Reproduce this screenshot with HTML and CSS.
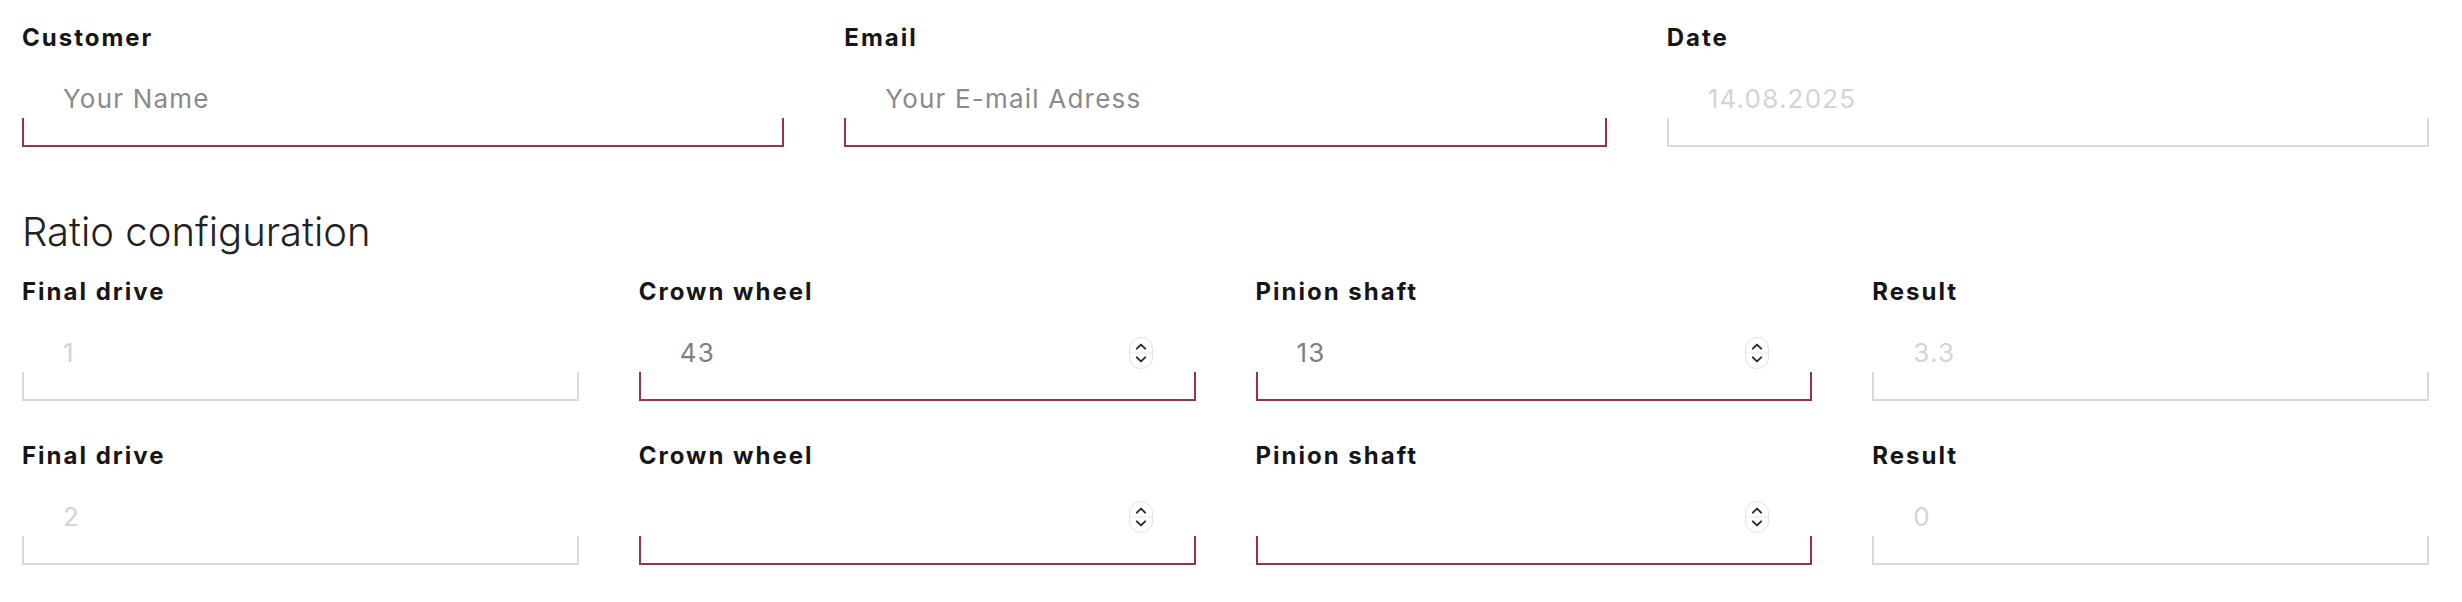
FILE: index.html
```html
<!DOCTYPE html>
<html lang="en">
<head>
<meta charset="utf-8">
<title>Ratio configuration</title>
<link rel="stylesheet" href="styles.css">
</head>
<body>
<div class="page">
  <div class="grid grid-3">
    <div class="field">
      <label class="label" for="customer">Customer</label>
      <div class="control"><input id="customer" class="input" type="text" placeholder="Your Name"></div>
    </div>
    <div class="field">
      <label class="label" for="email">Email</label>
      <div class="control"><input id="email" class="input" type="email" placeholder="Your E-mail Adress"></div>
    </div>
    <div class="field">
      <label class="label" for="date">Date</label>
      <div class="control is-disabled"><input id="date" class="input" type="text" value="14.08.2025" disabled></div>
    </div>
  </div>

  <h2 class="section-title">Ratio configuration</h2>

  <div class="ratio-rows">
    <div class="grid grid-4">
      <div class="field">
        <label class="label" for="fd1">Final drive</label>
        <div class="control is-disabled"><input id="fd1" class="input" type="text" value="1" disabled></div>
      </div>
      <div class="field">
        <label class="label" for="cw1">Crown wheel</label>
        <div class="control">
          <input id="cw1" class="input" type="number" value="43">
          <svg class="spinner" width="24" height="32" viewBox="0 0 24 32" aria-hidden="true"><rect x="0.5" y="0.5" width="23" height="31" rx="11.5" fill="#fff" stroke="#e3e3e3"/><line x1="1" y1="16" x2="23" y2="16" stroke="#e6e6e6"/><polyline points="7.8,11.6 12,7.6 16.2,11.6" fill="none" stroke="#2b2b2b" stroke-width="2" stroke-linecap="round" stroke-linejoin="round"/><polyline points="7.8,20.4 12,24.4 16.2,20.4" fill="none" stroke="#2b2b2b" stroke-width="2" stroke-linecap="round" stroke-linejoin="round"/></svg>
        </div>
      </div>
      <div class="field">
        <label class="label" for="ps1">Pinion shaft</label>
        <div class="control">
          <input id="ps1" class="input" type="number" value="13">
          <svg class="spinner" width="24" height="32" viewBox="0 0 24 32" aria-hidden="true"><rect x="0.5" y="0.5" width="23" height="31" rx="11.5" fill="#fff" stroke="#e3e3e3"/><line x1="1" y1="16" x2="23" y2="16" stroke="#e6e6e6"/><polyline points="7.8,11.6 12,7.6 16.2,11.6" fill="none" stroke="#2b2b2b" stroke-width="2" stroke-linecap="round" stroke-linejoin="round"/><polyline points="7.8,20.4 12,24.4 16.2,20.4" fill="none" stroke="#2b2b2b" stroke-width="2" stroke-linecap="round" stroke-linejoin="round"/></svg>
        </div>
      </div>
      <div class="field">
        <label class="label" for="r1">Result</label>
        <div class="control is-disabled"><input id="r1" class="input" type="text" value="3.3" disabled></div>
      </div>
    </div>

    <div class="grid grid-4">
      <div class="field">
        <label class="label" for="fd2">Final drive</label>
        <div class="control is-disabled"><input id="fd2" class="input" type="text" value="2" disabled></div>
      </div>
      <div class="field">
        <label class="label" for="cw2">Crown wheel</label>
        <div class="control">
          <input id="cw2" class="input" type="number">
          <svg class="spinner" width="24" height="32" viewBox="0 0 24 32" aria-hidden="true"><rect x="0.5" y="0.5" width="23" height="31" rx="11.5" fill="#fff" stroke="#e3e3e3"/><line x1="1" y1="16" x2="23" y2="16" stroke="#e6e6e6"/><polyline points="7.8,11.6 12,7.6 16.2,11.6" fill="none" stroke="#2b2b2b" stroke-width="2" stroke-linecap="round" stroke-linejoin="round"/><polyline points="7.8,20.4 12,24.4 16.2,20.4" fill="none" stroke="#2b2b2b" stroke-width="2" stroke-linecap="round" stroke-linejoin="round"/></svg>
        </div>
      </div>
      <div class="field">
        <label class="label" for="ps2">Pinion shaft</label>
        <div class="control">
          <input id="ps2" class="input" type="number">
          <svg class="spinner" width="24" height="32" viewBox="0 0 24 32" aria-hidden="true"><rect x="0.5" y="0.5" width="23" height="31" rx="11.5" fill="#fff" stroke="#e3e3e3"/><line x1="1" y1="16" x2="23" y2="16" stroke="#e6e6e6"/><polyline points="7.8,11.6 12,7.6 16.2,11.6" fill="none" stroke="#2b2b2b" stroke-width="2" stroke-linecap="round" stroke-linejoin="round"/><polyline points="7.8,20.4 12,24.4 16.2,20.4" fill="none" stroke="#2b2b2b" stroke-width="2" stroke-linecap="round" stroke-linejoin="round"/></svg>
        </div>
      </div>
      <div class="field">
        <label class="label" for="r2">Result</label>
        <div class="control is-disabled"><input id="r2" class="input" type="text" value="0" disabled></div>
      </div>
    </div>
  </div>
</div>
</body>
</html>
```

FILE: styles.css
```css
* { box-sizing: border-box; }

html, body {
  margin: 0;
  background: #ffffff;
}

body {
  font-family: Inter, "Noto Sans", "Liberation Sans", sans-serif;
  color: #1c1c1c;
}

.page {
  padding: 23px 33px 0 22px;
}

.grid {
  display: grid;
  column-gap: 60px;
}

.grid-3 { grid-template-columns: repeat(3, minmax(0, 1fr)); }
.grid-4 { grid-template-columns: repeat(4, minmax(0, 1fr)); }

.ratio-rows {
  display: grid;
  row-gap: 40px;
}

.field {
  display: flex;
  flex-direction: column;
  min-width: 0;
}

.label {
  display: block;
  font-weight: 700;
  font-size: 24px;
  line-height: 30px;
  letter-spacing: 2px;
  color: #161616;
  margin-bottom: 10px;
}

.section-title {
  margin: 61px 0 21px;
  font-weight: 300;
  font-size: 40px;
  line-height: 48px;
  color: #222222;
  letter-spacing: 0;
}

.control {
  --line: #9b3345;
  display: flex;
  align-items: center;
  padding: 20px 43px 30px 41px;
  border-bottom: 2px solid var(--line);
  background:
    linear-gradient(var(--line), var(--line)) left bottom / 2px 27px no-repeat,
    linear-gradient(var(--line), var(--line)) right bottom / 2px 27px no-repeat;
}

.control.is-disabled {
  --line: #dadada;
}

.input {
  flex: 1 1 auto;
  min-width: 0;
  height: 32px;
  margin: 0;
  padding: 0;
  border: 0;
  outline: none;
  background: transparent;
  font-family: Inter, "Noto Sans", "Liberation Sans", sans-serif;
  font-weight: 400;
  font-size: 26px;
  line-height: 32px;
  letter-spacing: 1.2px;
  color: #7e7e7e;
  -moz-appearance: textfield;
}

.input::placeholder {
  color: #8a8a8a;
  opacity: 1;
}

.input::-webkit-inner-spin-button,
.input::-webkit-outer-spin-button {
  -webkit-appearance: none;
  margin: 0;
}

.input:disabled {
  color: #d4d4d4;
  -webkit-text-fill-color: #d4d4d4;
  background: transparent;
}

.spinner {
  flex: 0 0 auto;
  display: block;
  filter: drop-shadow(0 0.5px 0.5px rgba(0, 0, 0, 0.06));
}
```
